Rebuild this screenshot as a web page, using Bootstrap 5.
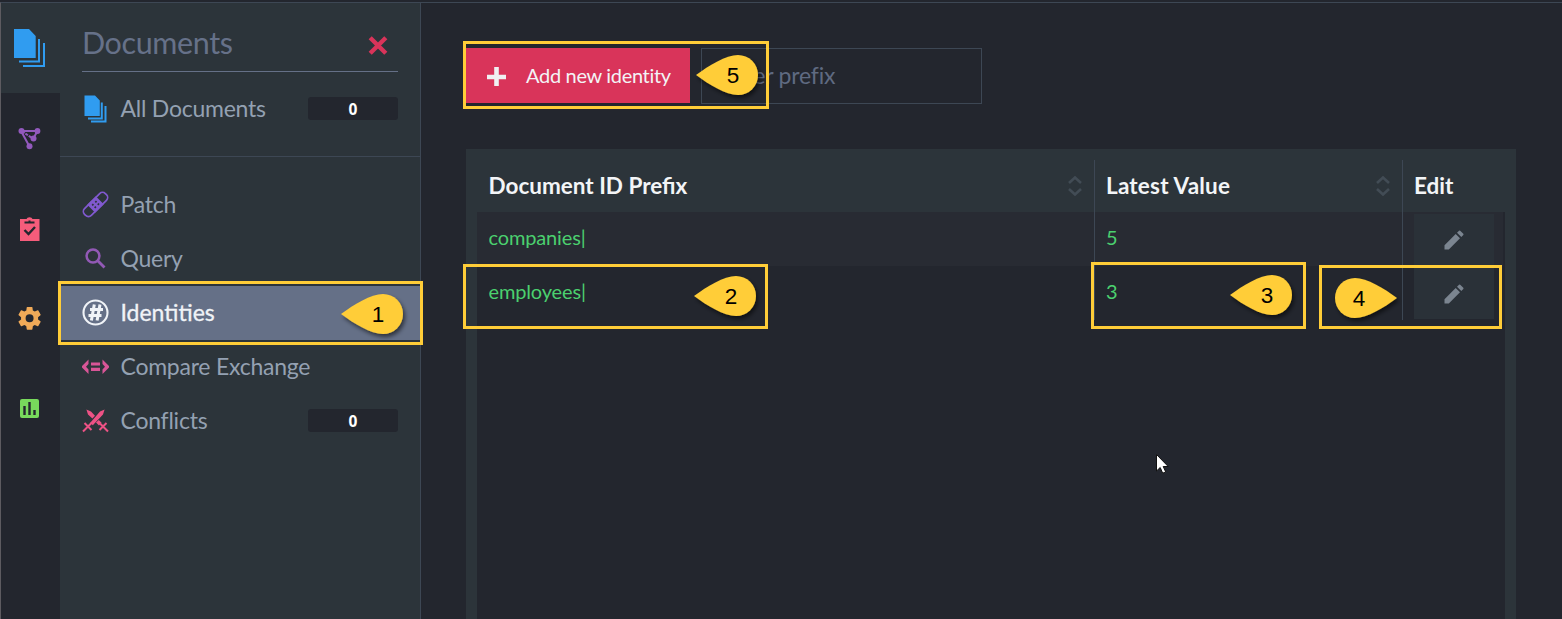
<!DOCTYPE html>
<html lang="en">
<head>
<meta charset="utf-8">
<title>Identities</title>
<link href="https://cdn.jsdelivr.net/npm/bootstrap@5.3.0/dist/css/bootstrap.min.css" rel="stylesheet">
<style>
:root{--dark:#23262e;--panel:#2c343a;--line:#3d4754;--muted:#94a1b2;--slate:#657087;--mark:#ffcd38}
body{font-family:Lato,"Liberation Sans",sans-serif;background:var(--dark);color:var(--muted);height:619px;overflow:hidden;line-height:1.2}
svg{display:block;flex:none}
.app{height:617px;border-top:1px solid var(--line);margin-top:2px;border-left:1px solid #5d5b60}
.rail{width:59px}
.rail a{height:90px;padding-left:12px}
.rail a:first-child{background:var(--panel)}
.side{width:361px;background:var(--panel);border-right:1px solid var(--line)}
.side-top{height:154px;border-bottom:1px solid var(--line);padding:0 22px}
.side-title{height:69px;border-bottom:1px solid var(--slate);font-size:30.500px;color:#667189;padding-right:10px}
.side-title .h-text{margin-top:11px;letter-spacing:-.38px}
.side-title svg{margin-top:16px}
.item{height:54px;padding:0 22px;font-size:23px;letter-spacing:-.24px;color:var(--muted);text-decoration:none}
.item svg{margin-right:11.500px}
.item.active{background:var(--slate);color:#f0f3f7;letter-spacing:0;-webkit-text-stroke:.3px #f0f3f7}
.item.all-docs{height:73px;padding:0}
.spacer{height:21px}
.count{width:90px;height:23px;margin-bottom:1px;border-radius:3px;background:var(--dark);color:#fff;font:bold 15.500px/24px "Open Sans",sans-serif;letter-spacing:0;text-align:center}
.all-docs .count{margin-bottom:0}
.main-area{padding:45px 46px 0 45px}
.btn-new{width:224px;height:55px;background:#d9345a;border:0;border-radius:0;color:#f3f3f5;font-size:20px;letter-spacing:-.32px;padding:0 0 0 19px}
.btn-new svg{margin-right:19px}
.btn-new span{margin-top:-2px}
.filter{width:281px;height:56px;background:var(--dark);border:1px solid var(--line);border-radius:0;font-size:23px;letter-spacing:-.2px;color:#657087;padding:0 20px 3px}
.filter::placeholder{color:#5f6a81;opacity:1}
.grid-box{background:var(--panel);margin-top:45px;padding:11px 11px 0;height:480px}
.cols{display:grid;grid-template-columns:617px 308px 103px}
.cols>div{padding:0 12px 0 11.500px}
.cols>div+div{border-left:1px solid var(--line);padding-left:11px}
.g-head{height:52px;color:#f3f5f7;font-size:22.500px;font-weight:700}
.g-head span{margin-top:-2px}
.g-head>div:nth-child(2) span{letter-spacing:.2px}
.g-body{background:var(--dark);height:410px}
.g-row{height:54px;color:#4bd06f;font-size:20px;letter-spacing:-.15px}
.g-row>.d-flex{padding-bottom:4px}
.g-row.odd{background:linear-gradient(#282b33,#282b33) no-repeat 0 0/1026px 100%}
.edit{width:80px;height:51px;margin-top:2px;background:#2a3138}
.overlay{position:absolute;left:0;top:0;pointer-events:none}
</style>
</head>
<body>
<div class="app d-flex">
 <nav class="rail d-flex flex-column">
  <a class="d-flex align-items-center"><svg width="33" height="40" viewBox="0 0 33 40" fill="#309cf0"><path d="M1 1H16L22.700 8V30H1ZM25 11H27V34.500H6V32.500H25ZM30 15H32V39H10V37H30Z"/></svg></a>
  <a class="d-flex align-items-center"><svg width="34" height="28" viewBox="0 0 34 28" fill="none" stroke="#9259bd" stroke-width="2"><path d="M8 7H24.500L20 15M8 7 16.500 22.500"/><path d="m9 7.500 11 7" stroke-dasharray="3 1"/><g fill="#9259bd" stroke="none"><circle cx="8.500" cy="7" r="3"/><circle cx="24.500" cy="7" r="2.900"/><circle cx="20.500" cy="14.500" r="3"/><circle cx="16.500" cy="22.300" r="3"/></g></svg></a>
  <a class="d-flex align-items-center"><svg width="34" height="28" viewBox="0 0 34 28"><g transform="translate(0 1)"><path fill="#f55c7b" d="M7 4h6.500q.5-1.800 3-1.800t3 1.800h7v22H7z"/><path d="M11.500 7.500h10M16.500 5.500v2" stroke="#23262e" stroke-width="2"/><path d="m11.500 15 4 4 6.500-7" fill="none" stroke="#23262e" stroke-width="2.400"/></g></svg></a>
  <a class="d-flex align-items-center"><svg width="34" height="28" viewBox="0 0 34 28"><path transform="translate(2.900 .6) scale(1.140)" fill="#f0aa58" d="M19.430 12.980c.04-.32.07-.64.07-.98s-.03-.66-.07-.98l2.110-1.650c.19-.15.24-.42.12-.64l-2-3.460c-.12-.22-.39-.3-.61-.22l-2.490 1c-.52-.4-1.080-.73-1.690-.98l-.38-2.650A.49.49 0 0 0 14 2h-4c-.25 0-.46.18-.49.42l-.38 2.650c-.61.25-1.170.59-1.690.98l-2.490-1c-.23-.09-.49 0-.61.22l-2 3.460c-.13.22-.07.49.12.64l2.110 1.650c-.04.32-.07.65-.07.98s.03.66.07.98l-2.110 1.650c-.19.15-.24.42-.12.64l2 3.460c.12.22.39.3.61.22l2.490-1c.52.4 1.080.73 1.690.98l.38 2.650c.03.24.24.42.49.42h4c.25 0 .46-.18.49-.42l.38-2.650c.61-.25 1.170-.59 1.690-.98l2.490 1c.23.09.49 0 .61-.22l2-3.460c.12-.22.07-.49-.12-.64zM12 15.500a3.500 3.500 0 1 1 0-7 3.500 3.500 0 0 1 0 7z"/></svg></a>
  <a class="d-flex align-items-center"><svg width="34" height="28" viewBox="0 0 34 28"><rect x="7" y="5" width="19" height="19" rx="2" fill="#78d95c"/><path d="M11.500 12v9M16.500 8v13M21.500 16v5" stroke="#23262e" stroke-width="2.400"/></svg></a>
 </nav>
 <aside class="side">
  <div class="side-top">
   <div class="side-title d-flex align-items-center justify-content-between"><span class="h-text">Documents</span><svg width="20" height="20" viewBox="0 0 20 20"><path d="m2.200 2.700 15.600 15.600m0-15.600L2.200 18.300" stroke="#d9345a" stroke-width="4.400"/></svg></div>
   <a class="item all-docs d-flex align-items-center"><svg width="27" height="29" viewBox="0 0 27 29" fill="#309cf0"><path d="M2.500 1.500H13L17.800 6.500V22H2.500ZM18.800 8.500H20.800V25.500H6V23.500H18.800ZM22.500 12H24.500V28.500H9V26.500H22.500Z"/></svg>All Documents<span class="count ms-auto">0</span></a>
  </div>
  <div class="spacer"></div>
  <a class="item d-flex align-items-center"><svg width="27" height="28" viewBox="0 0 27 28"><g transform="rotate(-45 13.500 13.500)" fill="none" stroke="#8159cf" stroke-width="1.700"><rect x="-1.200" y="8.700" width="29.400" height="9.600" rx="4"/><rect x="8.300" y="8.700" width="10.400" height="9.600" fill="#8159cf"/><path d="M10.500 11.800h1.800m2.600 0h1.800M10.500 15.300h1.800m2.600 0h1.800" stroke="#2c343a"/></g></svg>Patch</a>
  <a class="item d-flex align-items-center"><svg width="27" height="28" viewBox="0 0 27 28" fill="none" stroke="#9259b5" stroke-width="2.500"><circle cx="11" cy="11" r="6.400"/><path d="m15.500 15.500 7 7" stroke-width="2.800"/></svg>Query</a>
  <a class="item active d-flex align-items-center"><svg width="27" height="28" viewBox="0 0 27 28" fill="none" stroke="#f0f3f7"><circle cx="13.500" cy="13.500" r="12" stroke-width="2.100"/><path d="M12.300 5.500 9.400 21.500M18 5.500 15.100 21.500M8 10.500h13M6.500 16.500h13" stroke-width="3"/></svg>Identities</a>
  <a class="item d-flex align-items-center"><svg width="27" height="28" viewBox="0 0 27 28" fill="none" stroke="#d85597" stroke-width="3.200"><path d="M9 11h9M9 16.300h9"/><path fill="#d85597" stroke="none" d="M6.500 6.500 0 13v1.500L6.500 21v-4.500L4 13.700 6.500 11zM20.500 6.500 27 13v1.500L20.500 21v-4.500l2.500-2.800-2.500-2.700z"/></svg>Compare Exchange</a>
  <a class="item d-flex align-items-center"><svg width="27" height="28" viewBox="0 0 27 28" stroke="#ed5285" fill="none"><path fill="#ed5285" stroke="none" d="M22.600 2.500 21 7.500 10.800 18.200 8.300 15.700 18 4.500zM4.400 2.500 9 4.500l4 4.200-2.600 2.900L6 7.500zM16.800 13l2.800 2.800-2.600 2.600-3-2.800z"/><path d="m2.500 16 7 7M24.500 16l-7 7M1 24.500l9-9m16 9-8-8" stroke-width="2"/></svg>Conflicts<span class="count ms-auto">0</span></a>
 </aside>
 <main class="main-area flex-grow-1">
  <div class="d-flex" style="gap:11px">
   <button class="btn btn-new d-flex align-items-center"><svg width="22" height="22" viewBox="0 0 22 22"><path d="M11.500 2v19M2 12h19" stroke="#f0f0f2" stroke-width="4.600"/></svg><span>Add new identity</span></button>
   <input class="filter" placeholder="Filter prefix">
  </div>
  <section class="grid-box">
    <div class="g-head cols">
     <div class="d-flex align-items-center justify-content-between"><span>Document ID Prefix</span><svg width="14" height="20" viewBox="0 0 14 20" fill="none" stroke="#424c55" stroke-width="2.600"><path d="m1 7 6-5.500L13 7M1 13l6 5.500 6-5.500"/></svg></div>
     <div class="d-flex align-items-center justify-content-between"><span>Latest Value</span><svg width="14" height="20" viewBox="0 0 14 20" fill="none" stroke="#424c55" stroke-width="2.600"><path d="m1 7 6-5.500L13 7M1 13l6 5.500 6-5.500"/></svg></div>
     <div class="d-flex align-items-center"><span>Edit</span></div>
    </div>
    <div class="g-body">
     <div class="g-row odd cols"><div class="d-flex align-items-center">companies|</div><div class="d-flex align-items-center">5</div><div><div class="edit d-flex align-items-center justify-content-center"><svg width="20" height="20" viewBox="0 0 20 20" fill="#7b8590"><path d="M.5 19.500v-4.300L11.700 4l4.300 4.300L4.800 19.500zM13 2.700 15 .7q.6-.4 1.200 0l3.100 3.100q.5.600 0 1.200l-2 2z"/></svg></div></div></div>
     <div class="g-row cols"><div class="d-flex align-items-center">employees|</div><div class="d-flex align-items-center">3</div><div><div class="edit d-flex align-items-center justify-content-center"><svg width="20" height="20" viewBox="0 0 20 20" fill="#7b8590"><path d="M.5 19.500v-4.300L11.700 4l4.300 4.300L4.800 19.500zM13 2.700 15 .7q.6-.4 1.200 0l3.100 3.100q.5.600 0 1.200l-2 2z"/></svg></div></div></div>
    </div>
  </section>
 </main>
</div>
<!-- numbered annotations and pointer over the page -->
<svg class="overlay" width="1562" height="619" viewBox="0 0 1562 619">
 <defs><filter id="sh" x="-20%" y="-20%" width="150%" height="160%"><feDropShadow dx="2" dy="3" stdDeviation="2" flood-color="#000" flood-opacity=".55"/></filter>
 <path id="drop" d="M0 20C13 10.500 30 0 42 0A20 20 0 0 1 42 40C30 40 13 29.500 0 20Z"/></defs>
 <g fill="none" stroke="#ffcd38" stroke-width="3">
  <rect x="59.500" y="282.500" width="362" height="61"/><rect x="464.500" y="265.500" width="302" height="62"/><rect x="1092.500" y="263.500" width="212" height="64"/><rect x="1320.500" y="266.500" width="180" height="61"/><rect x="464.500" y="42.500" width="303" height="65"/>
 </g>
 <g fill="#ffcd38"><g filter="url(#sh)"><use href="#drop" x="341" y="294"/></g><g filter="url(#sh)"><use href="#drop" x="694" y="276"/></g><g filter="url(#sh)"><use href="#drop" x="1230" y="275"/></g><g filter="url(#sh)"><use href="#drop" transform="translate(1397 278) scale(-1 1)"/></g><g filter="url(#sh)"><use href="#drop" x="696" y="55"/></g></g>
 <g font-family="Liberation Sans, sans-serif" font-size="22.500" text-anchor="middle" fill="#000"><text x="378" y="322">1</text><text x="731" y="304">2</text><text x="1267" y="303">3</text><text x="1359" y="306">4</text><text x="733" y="83">5</text></g>
 <path d="M1156.500 454.500v16.500l3.700-3.500 2.500 5.700 3-1.300-2.500-5.400h5z" fill="#fff" stroke="#111" stroke-width="1"/>
</svg>
<script src="https://cdn.jsdelivr.net/npm/bootstrap@5.3.0/dist/js/bootstrap.bundle.min.js"></script>
</body>
</html>
